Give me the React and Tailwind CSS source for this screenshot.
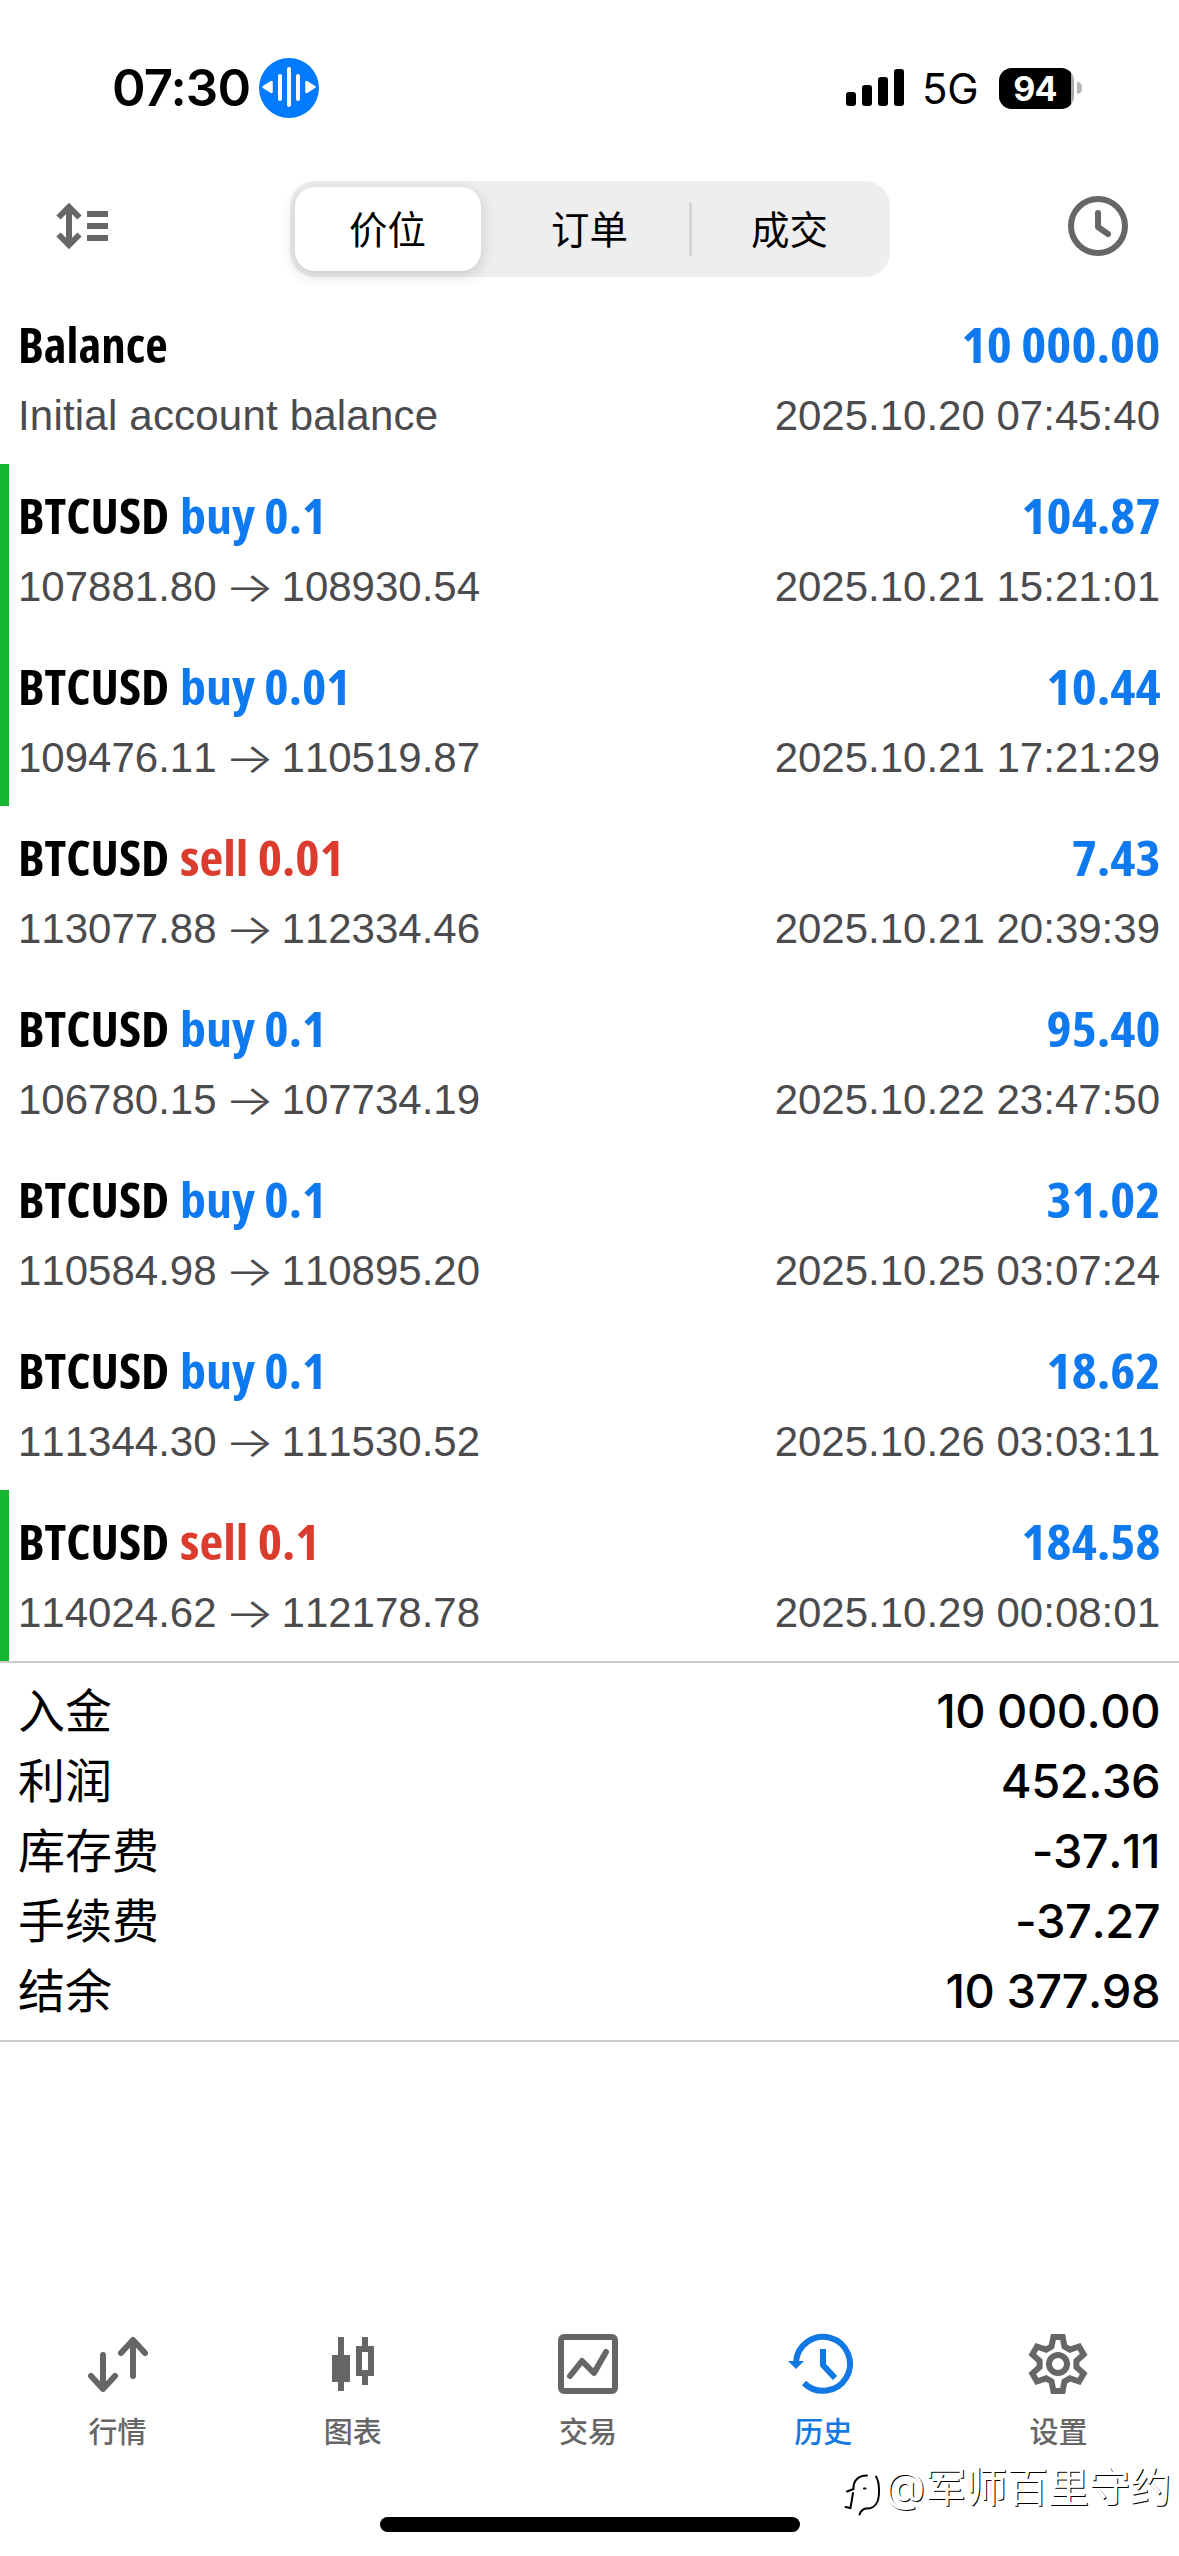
const deals = [
  { symbol: 'Balance', note: 'Initial account balance', profit: '10 000.00', time: '2025.10.20 07:45:40' },
  { symbol: 'BTCUSD', side: 'buy', volume: '0.1', open: '107881.80', close: '108930.54', profit: '104.87', time: '2025.10.21 15:21:01', marked: true },
  { symbol: 'BTCUSD', side: 'buy', volume: '0.01', open: '109476.11', close: '110519.87', profit: '10.44', time: '2025.10.21 17:21:29', marked: true },
  { symbol: 'BTCUSD', side: 'sell', volume: '0.01', open: '113077.88', close: '112334.46', profit: '7.43', time: '2025.10.21 20:39:39' },
  { symbol: 'BTCUSD', side: 'buy', volume: '0.1', open: '106780.15', close: '107734.19', profit: '95.40', time: '2025.10.22 23:47:50' },
  { symbol: 'BTCUSD', side: 'buy', volume: '0.1', open: '110584.98', close: '110895.20', profit: '31.02', time: '2025.10.25 03:07:24' },
  { symbol: 'BTCUSD', side: 'buy', volume: '0.1', open: '111344.30', close: '111530.52', profit: '18.62', time: '2025.10.26 03:03:11' },
  { symbol: 'BTCUSD', side: 'sell', volume: '0.1', open: '114024.62', close: '112178.78', profit: '184.58', time: '2025.10.29 00:08:01', marked: true },
];

const totals = [
  { label: '入金', value: '10 000.00' },
  { label: '利润', value: '452.36' },
  { label: '库存费', value: '-37.11' },
  { label: '手续费', value: '-37.27' },
  { label: '结余', value: '10 377.98' },
];

// Outline of a six-toothed gear around 0,0
const gearPoints = [0, 60, 120, 180, 240, 300]
  .flatMap((deg) => {
    const a = (deg * Math.PI) / 180;
    return [[-6.5, -17.5], [-4.6, -27], [4.6, -27], [6.5, -17.5]].map(
      ([x, y]) => `${(x * Math.cos(a) - y * Math.sin(a)).toFixed(2)},${(x * Math.sin(a) + y * Math.cos(a)).toFixed(2)}`
    );
  })
  .join(' ');

function QuotesIcon() {
  return (
    <svg viewBox="0 0 60 60" className="size-[60px]" fill="none" stroke="currentColor" strokeWidth="6" strokeLinecap="round" strokeLinejoin="round">
      <path d="M15 21v33M3 42l12 13 12-13M45 42V7M33 19L45 6l12 13" />
    </svg>
  );
}

function ChartsIcon() {
  return (
    <svg viewBox="0 0 60 60" className="size-[60px]" fill="currentColor">
      <path d="M15 3h6v18h6v27h-6v9h-6v-9H9V21h6z" />
      <path fillRule="evenodd" d="M39 3h6v9h6v30h-6v9h-6v-9h-6V12h6zM39 18v18h6V18z" />
    </svg>
  );
}

function TradeIcon() {
  return (
    <svg viewBox="0 0 60 60" className="size-[60px]" fill="none" stroke="currentColor" strokeWidth="6" strokeLinecap="round" strokeLinejoin="round">
      <rect x="3" y="3" width="54" height="54" rx="3" />
      <path d="M12 42l12-15 12 12 12-21" />
    </svg>
  );
}

function HistoryIcon() {
  return (
    <svg viewBox="0 0 60 60" className="size-[60px] overflow-visible" fill="none" stroke="currentColor" strokeWidth="6">
      <path d="M3 29A27 27 0 1 1 11 49" />
      <path d="M30 15v16l12 13" />
      <path d="M-5 27h16l-8 8z" fill="currentColor" stroke="none" />
    </svg>
  );
}

function SettingsIcon() {
  return (
    <svg viewBox="-30 -30 60 60" className="size-[60px]" fill="none" stroke="currentColor" strokeWidth="6">
      <polygon points={gearPoints} />
      <circle r="9" />
    </svg>
  );
}

const tabs = [
  { label: '行情', Icon: QuotesIcon },
  { label: '图表', Icon: ChartsIcon },
  { label: '交易', Icon: TradeIcon },
  { label: '历史', Icon: HistoryIcon, active: true },
  { label: '设置', Icon: SettingsIcon },
];

function StatusBar() {
  return (
    <div className="flex h-[176px] items-center justify-between pl-[112px] pr-[97px]">
      <div className="flex items-center">
        <span className="w-[147px] whitespace-nowrap text-[51px] font-semibold leading-[60px] tracking-[-0.9px]">07:30</span>
        <svg viewBox="0 0 60 60" className="size-[60px]">
          <circle cx="30" cy="30" r="30" fill="#007aff" />
          <path d="M30 11v36M21 18v23M39 18v23" stroke="#fff" strokeWidth="4" strokeLinecap="round" />
          <path d="M4.500 29l8-5v10zM55.500 29l-8-5v10z" fill="#fff" stroke="#fff" strokeWidth="2.500" strokeLinejoin="round" />
        </svg>
      </div>
      <div className="flex items-center">
        <svg viewBox="0 0 58 38" className="h-[38px] w-[58px]">
          <rect x="0" y="23" width="10" height="14" rx="3" />
          <rect x="16" y="16" width="10" height="21" rx="3" />
          <rect x="32" y="8" width="10" height="29" rx="3" />
          <rect x="48" y="0" width="10" height="37" rx="3" />
        </svg>
        <span className="ml-[18px] mt-0.5 w-[77px] whitespace-nowrap text-[42px] leading-[60px] tracking-[-0.3px]">5G</span>
        <span className="flex h-[41px] w-[75px] overflow-hidden rounded-[13px] bg-[#a9a9a9]">
          <span className="w-[72px] bg-black text-center text-[34px] font-bold leading-[41px] tracking-[-0.8px] text-white">94</span>
        </span>
        <span className="ml-[3px] h-3 w-[5px] rounded-r-full bg-[#b5b5b5]" />
      </div>
    </div>
  );
}

function Toolbar() {
  return (
    <div className="flex h-[117px] items-start justify-between pl-[56px] pr-[51px] pt-[5px] text-[#666]">
      <svg viewBox="0 0 52 46" className="mt-[22px] h-[46px] w-[52px]" fill="none" stroke="currentColor" strokeWidth="6">
        <path d="M13 5v36M2.500 14.500L13 4l10.500 10.500M2.500 31.500L13 42l10.500-10.500M31 11h21M31 23h21M31 35h21" />
      </svg>
      <div className="ml-[3px] grid h-24 w-[600px] grid-cols-3 rounded-[25px] bg-[#eeeeef] text-[38.5px] text-black">
        <button className="my-1.5 ml-[5px] mr-[9px] flex items-center justify-center rounded-[20px] bg-white pt-[3px] shadow-[0_4px_14px_2px_rgba(0,0,0,0.13)]">价位</button>
        <button className="flex items-center justify-center pt-[3px]">订单</button>
        <button className="relative flex items-center justify-center pt-[3px]">
          <span className="absolute -left-px top-[21px] h-[54px] w-[3px] rounded bg-[#d4d4d6]" />
          成交
        </button>
      </div>
      <svg viewBox="0 0 60 60" className="mt-[15px] size-[60px]" fill="none" stroke="currentColor" strokeWidth="6" strokeLinecap="round" strokeLinejoin="round">
        <circle cx="30" cy="30" r="27" />
        <path d="M30 17v14l10 7" />
      </svg>
    </div>
  );
}

function DealRow({ deal }) {
  const sideColor = deal.side === 'sell' ? 'text-[#dc3c2d]' : 'text-[#0f7af0]';
  return (
    <div className={`h-[171px] border-l-[9px] pl-[9px] pr-[19px] pt-[19px] ${deal.marked ? 'border-[#14b72f]' : 'border-transparent'}`}>
      <div className="flex h-[66px] items-center justify-between whitespace-nowrap font-['Open_Sans'] text-[49px] font-bold font-stretch-condensed">
        <div className="flex">
          <span className={deal.side && 'origin-left scale-x-103'}>{deal.symbol}</span>
          {deal.side && <span className={`ml-[15px] origin-left scale-x-106 ${sideColor}`}>{deal.side} {deal.volume}</span>}
        </div>
        <div className="origin-right scale-x-109 text-[#0f7af0]">{deal.profit}</div>
      </div>
      <div className="mt-0.5 flex h-[70px] items-center justify-between whitespace-nowrap font-['Liberation_Sans'] text-[42px] text-[#4b4b4e] [font-kerning:none]">
        {deal.note ? <span className="tracking-[0.2px]">{deal.note}</span> : (
          <span className="flex items-center">
            {deal.open}
            <span className="w-[65px] scale-x-125 text-center font-['Inter'] font-light">→</span>
            {deal.close}
          </span>
        )}
        <span>{deal.time}</span>
      </div>
    </div>
  );
}

function TabBar() {
  return (
    <nav className="grid grid-cols-5 pr-[3px] pt-[292px]">
      {tabs.map(({ label, Icon, active }) => (
        <div key={label} className={`flex flex-col items-center ${active ? 'text-[#1279e4]' : 'text-[#666]'}`}>
          <Icon />
          <span className="mt-[18px] text-[29px] font-medium leading-[42px]">{label}</span>
        </div>
      ))}
    </nav>
  );
}

function Watermark() {
  return (
    <div className="absolute right-2 top-[2456px] flex items-center text-[41px] leading-[60px] text-white [text-shadow:1px_1px_0_#000]">
      <svg viewBox="0 0 40 45" className="mt-4 h-[45px] w-10" fill="none" stroke="#000" strokeWidth="2" strokeLinecap="round">
        <path d="M3 19.500L9.500 17C9 9 14 3.500 23 3.500M9 21L6.500 36 1.500 35" />
        <path d="M32 4.500c4 6 3.500 20 1.500 25-2 5-7 7.500-12 7-3 1-5 3-6 6" />
        <path d="M20 16.500h1.500" />
      </svg>
      <span className="text-[42px]">@</span>
      <span>军师百里守约</span>
    </div>
  );
}

export default function App() {
  return (
    <div className="relative h-[2556px] w-[1179px] overflow-hidden bg-white font-['Inter','Noto_Sans_CJK_SC',sans-serif] text-black">
      <StatusBar />
      <Toolbar />
      {deals.map((deal) => (
        <DealRow key={deal.time} deal={deal} />
      ))}
      <div className="h-[381px] border-y-2 border-[#cdcdcf] pl-[18px] pr-[19px] pt-[13px]">
        {totals.map((row) => (
          <div key={row.label} className="flex h-[70px] items-center justify-between">
            <span className="text-[47px]">{row.label}</span>
            <span className="text-[47px] font-medium tracking-[-0.5px] [font-kerning:none]">{row.value}</span>
          </div>
        ))}
      </div>
      <TabBar />
      <div className="absolute bottom-6 left-[380px] h-[15px] w-[420px] rounded-full bg-black" />
      <Watermark />
    </div>
  );
}
